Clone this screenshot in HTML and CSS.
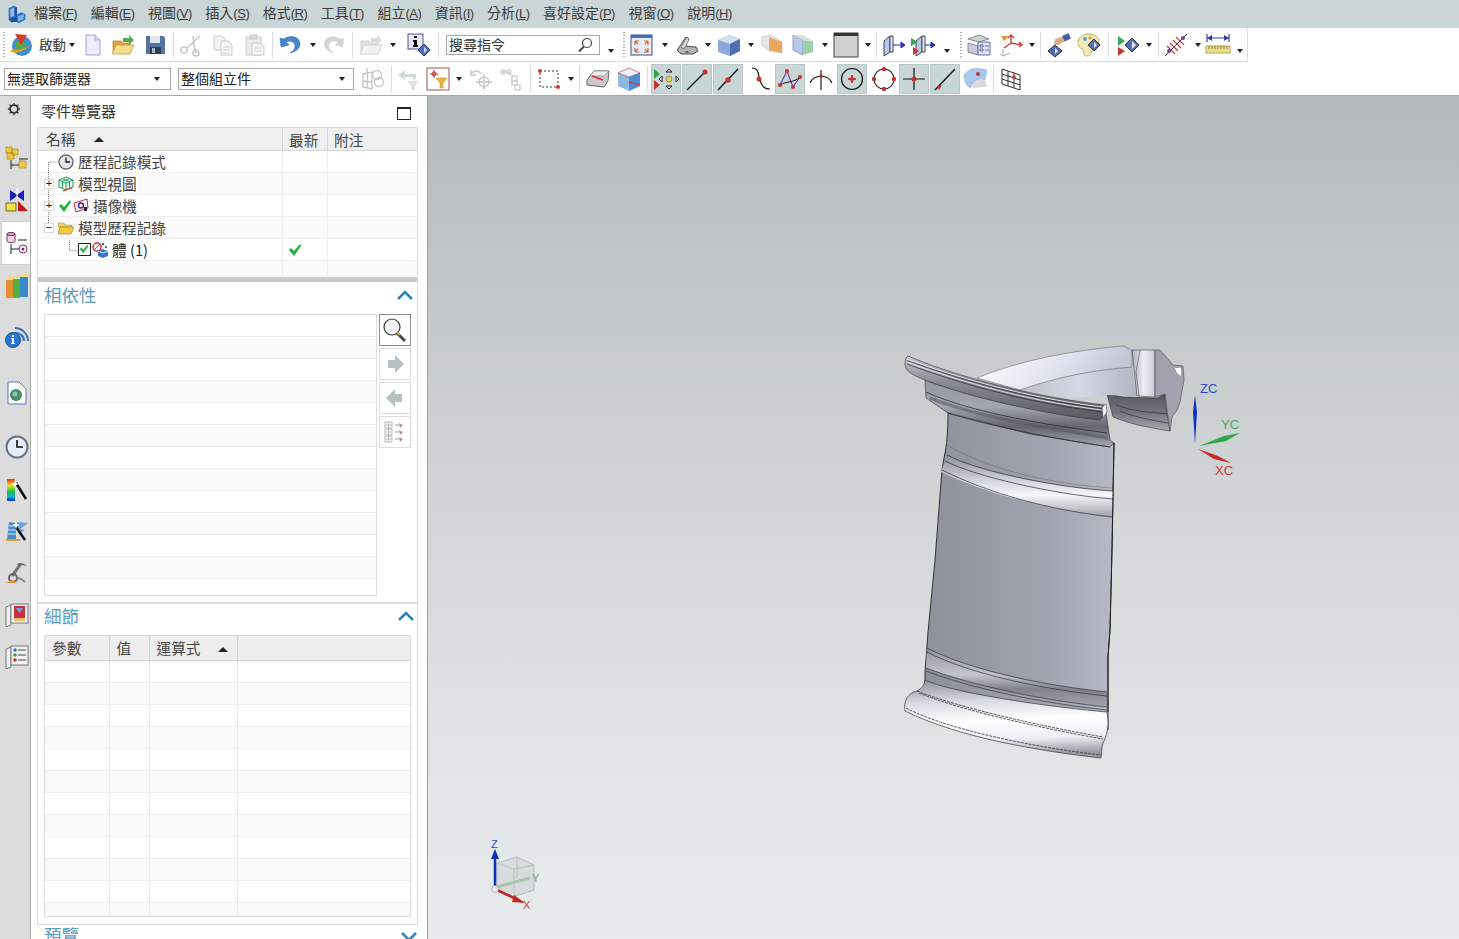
FILE: index.html
```html
<!DOCTYPE html>
<html lang="zh-Hant">
<head>
<meta charset="utf-8">
<title>NX</title>
<link rel="stylesheet" href="styles.css">
</head>
<body>
<header class="menubar">
  <svg class="applogo" viewBox="0 0 24 24"><path d="M2 5l6-3 4 2v9l5-3 5 2v7l-8 4-3-2-6 1-3-3z" fill="#2f6fc4"/><path d="M4 6l5-2v10l-5 2z" fill="#8dbcf0"/><path d="M9 4l3 1v9l-3 0z" fill="#1d4f9c"/><path d="M13 15l7-3v6l-7 3z" fill="#7fb2ea"/><path d="M3 18l8-3 2 6-8 1z" fill="#1d4f9c"/></svg>
  <nav class="menus">
    <span class="m">檔案<i>(<u>F</u>)</i></span>
    <span class="m">編輯<i>(<u>E</u>)</i></span>
    <span class="m">視圖<i>(<u>V</u>)</i></span>
    <span class="m">插入<i>(<u>S</u>)</i></span>
    <span class="m">格式<i>(<u>R</u>)</i></span>
    <span class="m">工具<i>(<u>T</u>)</i></span>
    <span class="m">組立<i>(<u>A</u>)</i></span>
    <span class="m">資訊<i>(<u>I</u>)</i></span>
    <span class="m">分析<i>(<u>L</u>)</i></span>
    <span class="m">喜好設定<i>(<u>P</u>)</i></span>
    <span class="m">視窗<i>(<u>O</u>)</i></span>
    <span class="m">說明<i>(<u>H</u>)</i></span>
  </nav>
</header>

<div class="bar bar1">
  <span class="c w8"><b class="grip"></b></span>
  <span class="c w27"><svg class="i" viewBox="0 0 24 24"><circle cx="12" cy="13" r="10" fill="#3f8fd0"/><path d="M5 9l7-2 4 5-5 7-5-4z" fill="#5aa84a"/><path d="M0 18C7 23 20 16 24 5c-2 8-13 14-21 11z" fill="#e8a020"/><path d="M5 1l12 1-6 10z" fill="#d83c2c"/></svg></span>
  <span class="c w32 lbl"><span>啟動</span></span>
  <span class="c w10"><b class="car"></b></span>
  <span class="c w32"><svg class="i" viewBox="0 0 24 24"><path d="M5 2h9l5 5v15H5z" fill="#eeeefa" stroke="#a0a0d8"/><path d="M14 2v5h5" fill="#dcdcf2" stroke="#a0a0d8"/></svg></span>
  <span class="c w28"><svg class="i" viewBox="0 0 24 24"><path d="M2 8h8l2 2h7v10H2z" fill="#d9a93c" stroke="#a98428" stroke-width=".7"/><path d="M5 12h18l-4 9H1z" fill="#f4de8c" stroke="#b8963a" stroke-width=".7"/><path d="M12 5h6V2l5 5-5 5V9h-6z" fill="#5aa84a"/></svg></span>
  <span class="c w36"><svg class="i" viewBox="0 0 24 24"><path d="M3 3h17l2 2v16H3z" fill="#53749e"/><rect x="7" y="3" width="10" height="7" fill="#dfe6ef"/><rect x="7" y="14" width="11" height="7" fill="#2d3e55"/><rect x="9" y="15" width="3" height="5" fill="#a8b6c8"/></svg></span>
  <b class="sep"></b>
  <span class="c w34"><svg class="i" viewBox="0 0 24 24" fill="none" stroke="#c6c9c9" stroke-width="1.600"><path d="M21 3L8 15M14 3l1 10 2 7"/><circle cx="5" cy="17" r="3"/><circle cx="17" cy="20" r="3"/></svg></span>
  <span class="c w30"><svg class="i" viewBox="0 0 24 24"><path d="M3 3h8l3 3v11H3z" fill="#f1f1f1" stroke="#cdcdcd"/><path d="M10 8h7l4 4v10H10z" fill="#f6f6f6" stroke="#c8c8c8"/><path d="M12 14h7M12 17h7M12 20h7" stroke="#cfcfcf"/></svg></span>
  <span class="c w34"><svg class="i" viewBox="0 0 24 24"><rect x="3" y="4" width="15" height="18" fill="#ececec" stroke="#cbcbcb"/><rect x="7" y="2" width="7" height="4" fill="#dcdcdc" stroke="#c4c4c4"/><path d="M9 10h8l4 4v8H9z" fill="#f7f7f7" stroke="#c8c8c8"/><path d="M11 15h8M11 18h8" stroke="#cfcfcf"/></svg></span>
  <b class="sep"></b>
  <span class="c w34"><svg class="i" viewBox="0 0 24 24"><path d="M2 5l1 9 8-2-3-3c4-2 9 0 9 4 0 3-2 5-5 7 6-1 10-5 10-9C22 4 13 1 6 6z" fill="#4a86d0" stroke="#2f62a8" stroke-width=".5"/></svg></span>
  <span class="c w12"><b class="car"></b></span>
  <span class="c w30"><svg class="i" viewBox="0 0 24 24"><path d="M22 5l-1 9-8-2 3-3c-4-2-9 0-9 4 0 3 2 5 5 7-6-1-10-5-10-9C2 4 11 1 18 6z" fill="#cfd6d6"/></svg></span>
  <span class="w3"></span><b class="sep"></b>
  <span class="c w36"><svg class="i" viewBox="0 0 24 24"><path d="M2 8h8l2 2h7v10H2z" fill="#e3e3e3" stroke="#d2d2d2"/><path d="M5 12h18l-4 9H1z" fill="#f2f2f2" stroke="#d4d4d4"/><path d="M12 5h6V2l5 5-5 5V9h-6z" fill="#dcdcdc"/></svg></span>
  <span class="c w8"><b class="car"></b></span>
  <span class="w3"></span>
  <span class="c w38"><svg class="i" viewBox="0 0 24 24"><rect x="1" y="1" width="15" height="15" fill="#e8e8f4" stroke="#50509c"/><path d="M7 3h3v2H7zM6 7h4v5h1v2H6v-2h1V9H6z" fill="#111"/><path d="M17 11l6 6-6 6-6-6z" fill="#4e6fb8" stroke="#2a3f80"/><path d="M17 14l3 3-3 3z" fill="#d7e0f4"/></svg></span>
  <b class="sep"></b>
  <span class="w7"></span>
  <div class="search"><span>搜尋指令</span><svg class="lens" viewBox="0 0 16 16" fill="none" stroke="#444" stroke-width="1.200"><circle cx="10" cy="6" r="4.500"/><path d="M7 9.500L2 14.500" stroke-width="2"/></svg></div>
  <span class="c w22"><b class="car low"></b></span>
  <span class="c w4"><b class="grip"></b></span>
  <span class="c w32"><svg class="i" viewBox="0 0 24 24"><rect x="1" y="2" width="21" height="20" fill="#e7ebf5" stroke="#4a6fb0" stroke-width="1.200"/><rect x="1" y="2" width="21" height="3" fill="#4a6fb0"/><path d="M5 8h4M5 8v4M18 8h-4M18 8v4M5 19h4M5 19v-4M18 19h-4M18 19v-4M5 8l3 3M18 8l-3 3M5 19l3-3M18 19l-3-3" stroke="#d8682c" stroke-width="1.200" fill="none"/></svg></span>
  <span class="c w14"><b class="car"></b></span>
  <span class="c w30"><svg class="i" viewBox="0 0 24 24"><path d="M2 17l3-4 6-9 3 2-4 7 11 1 2 4-5 3H6z" fill="#b0b2b4" stroke="#4c4c4c"/><path d="M12 4l-6 10 3 2 5-9z" fill="#dadada" stroke="#555" stroke-width=".6"/><ellipse cx="12" cy="19" rx="2" ry="1" fill="#666"/></svg></span>
  <span class="c w12"><b class="car"></b></span>
  <span class="c w30"><svg class="i" viewBox="0 0 24 24"><path d="M12 2l11 4v12l-10 5-12-4V7z" fill="#8ea8dc"/><path d="M12 2l11 4-10 5L1 7z" fill="#d3def5"/><path d="M13 11l10-5v12l-10 5z" fill="#4d6fb4"/></svg></span>
  <span class="c w14"><b class="car"></b></span>
  <span class="c w28"><svg class="i" viewBox="0 0 24 24"><path d="M2 4l9-2 11 7v11l-13-2-7-6z" fill="#e6e6e6" stroke="#cfcfcf"/><path d="M9 4l13 5v11l-13-3z" fill="#e8a860"/></svg></span>
  <span class="c w34"><svg class="i" viewBox="0 0 24 24"><path d="M2 2l10 5v15l-10-5z" fill="#b8c8e8" stroke="#8aa0c8"/><path d="M12 7l10 1v11l-10 3z" fill="#9cd0a8"/><path d="M2 2l10 0 10 6-10-1z" fill="#dcdcdc"/></svg></span>
  <span class="c w10"><b class="car"></b></span>
  <span class="c w32"><svg class="i" viewBox="0 0 24 24"><rect x="0" y="0" width="24" height="24" fill="#cfcfcf" stroke="#444"/><rect x="0" y="0" width="24" height="3" fill="#333"/></svg></span>
  <span class="c w12"><b class="car"></b></span>
  <span class="w2"></span><b class="sep"></b>
  <span class="c w34"><svg class="i" viewBox="0 0 24 24"><path d="M2 8l6-5v16l-6 4z" fill="#b8c8ea" stroke="#445"/><path d="M8 3h3v16H8z" fill="#e6ecf8" stroke="#445"/><path d="M11 12h8M19 9l4 3-4 3z" stroke="#2a2ac0" fill="#2a2ac0"/></svg></span>
  <span class="c w24"><svg class="i" viewBox="0 0 24 24"><path d="M5 8l6-5v16l-6 4z" fill="#b8c8ea" stroke="#445"/><path d="M11 3h3v16h-3z" fill="#e6ecf8" stroke="#445"/><path d="M14 12h6M20 9l4 3-4 3z" stroke="#2a2ac0" fill="#2a2ac0"/><path d="M0 5l7 4-7 4z" fill="#3aa85a"/><path d="M2 14l6 4-6 4z" fill="#c83a30"/></svg></span>
  <span class="c w24"><b class="car low"></b></span>
  <span class="c w4"><b class="grip"></b></span>
  <span class="c w32"><svg class="i" viewBox="0 0 24 24"><path d="M1 6l11-4 10 4-10 3z" fill="#c8d8c8" stroke="#889"/><path d="M1 10l10 3v9l-10-3z" fill="#c8ccd4" stroke="#889"/><path d="M11 9l12 0v13H11z" fill="#dfe2f2" stroke="#6a6aa8"/><path d="M13 12h3v2h-3zM18 13h4M13 16h3v2h-3zM18 17h4" stroke="#6a6aa8" fill="none"/></svg></span>
  <span class="c w32"><svg class="i" viewBox="0 0 24 24" fill="none"><path d="M12 10v-8M9 5l3-3 3 3" stroke="#c83a30" stroke-width="1.300"/><path d="M12 10l10 2M20 9l3 3-3 2" stroke="#c83a30" stroke-width="1.300"/><path d="M12 10L5 15" stroke="#c83a30" stroke-width="1.300"/><path d="M2 3h9L5 8z" fill="#e89040"/><path d="M4 16v7M4 23l7-3M4 23l-3-2" stroke="#aab" stroke-width="1"/></svg></span>
  <span class="c w10"><b class="car"></b></span>
  <span class="w3"></span><b class="sep"></b>
  <span class="c w36"><svg class="i" viewBox="0 0 24 24"><path d="M8 6c3-1 8-3 10-2l2 3-9 5H7z" fill="#d8b088"/><rect x="16" y="1" width="7" height="6" fill="#4a5aa8" transform="rotate(-25 20 4)"/><path d="M8 12l7 6-7 6-7-6z" fill="#4e6fb8" stroke="#333"/><path d="M8 15l3 3-3 3z" fill="#e2e8f8"/></svg></span>
  <span class="c w24"><svg class="i" viewBox="0 0 24 24"><path d="M12 1C5 1 1 5 1 10s4 5 5 7 0 6 4 6 4-4 6-6 6-3 6-8-4-8-10-8z" fill="#f4e8b8" stroke="#c8b050"/><circle cx="8" cy="6" r="2" fill="#48a8d8"/><circle cx="13" cy="5" r="1.500" fill="#e88a38"/><path d="M17 6l6 6-6 6-6-6z" fill="#4e6fb8" stroke="#333"/><path d="M17 9l3 3-3 3z" fill="#e2e8f8"/></svg></span>
  <span class="w7"></span><b class="sep"></b>
  <span class="c w36"><svg class="i" viewBox="0 0 24 24"><path d="M3 3l7 5-7 5z" fill="#3aa85a"/><path d="M3 14l7 4-7 5z" fill="#c83a30"/><path d="M17 5l7 7-7 7-7-7z" fill="#4e6fb8" stroke="#333"/><path d="M17 8l4 4-4 4z" fill="#e2e8f8"/></svg></span>
  <span class="c w8"><b class="car"></b></span>
  <span class="w5"></span><b class="sep"></b>
  <span class="c w34"><svg class="i" viewBox="0 0 24 24" fill="none"><path d="M1 23L23 1" stroke="#333"/><path d="M3 13l8 8M6 10l8 8M9 7l8 8M12 4l8 8" stroke="#c83a30" stroke-width="1.100"/><circle cx="5" cy="18" r="2" fill="#4a4ab0"/><circle cx="19" cy="5" r="2" fill="#4a4ab0"/></svg></span>
  <span class="c w10"><b class="car"></b></span>
  <span class="c w30"><svg class="i" viewBox="0 0 24 24"><path d="M1 5h22M1 1v8M23 1v8" stroke="#3a3a9c" fill="none" stroke-width="1.200"/><path d="M1 5l5-3v6zM23 5l-5-3v6z" fill="#3a3a9c"/><rect x="0" y="13" width="24" height="7" fill="#ecdc8c" stroke="#b8a858"/><path d="M3 13v3M6 13v3M9 13v3M12 13v3M15 13v3M18 13v3M21 13v3" stroke="#8a7a38"/></svg></span>
  <span class="c w14"><b class="car low"></b></span>
</div>

<div class="bar bar2">
  <div class="sel s1"><span>無選取篩選器</span><b class="car"></b></div>
  <div class="sel s2"><span>整個組立件</span><b class="car"></b></div>
  <span class="c w37"><svg class="i" viewBox="0 0 24 24" fill="none" stroke="#c4c8c8" stroke-width="1.300"><path d="M2 7l9-2v17l-9-2zM2 14l9 1M6.500 6v15M6 1v6"/><circle cx="16" cy="8" r="4.500"/><circle cx="18" cy="15" r="4.500"/></svg></span>
  <b class="sep"></b>
  <span class="c w32"><svg class="i" viewBox="0 0 24 24"><path d="M9 3L2 8l7 5V10h8v4l3-3V7H9z" fill="#d2d8d8"/><path d="M11 14h12l-4 5v4h-4v-4z" fill="#e2e4e4"/></svg></span>
  <span class="c w28"><svg class="i" viewBox="0 0 24 24"><rect x="1" y="1" width="22" height="22" fill="#fff" stroke="#a85050"/><path d="M8 3v8M4 7h8" stroke="#c83030"/><circle cx="8" cy="7" r="2" fill="none" stroke="#c83030"/><path d="M10 11h11l-4 5v5h-3v-5z" fill="#e8b83c" stroke="#a8882c" stroke-width=".5"/></svg></span>
  <span class="c w14"><b class="car"></b></span>
  <span class="c w30"><svg class="i" viewBox="0 0 24 24" fill="none" stroke="#c4c8c8" stroke-width="1.300"><path d="M2 7c3-4 8-4 10 0M2 3v5h5"/><circle cx="15" cy="15" r="5"/><path d="M15 7v16M7 15h16"/></svg></span>
  <span class="c w30"><svg class="i" viewBox="0 0 24 24" fill="none" stroke="#cdd0d0" stroke-width="1.400"><path d="M3 5h6l3 3"/><circle cx="4" cy="5" r="2"/><circle cx="10" cy="5" r="2"/><rect x="13" y="9" width="5" height="5"/><rect x="13" y="14" width="5" height="4"/><rect x="16" y="18" width="5" height="5"/></svg></span>
  <span class="w4"></span><b class="sep"></b>
  <span class="c w36"><svg class="i" viewBox="0 0 24 24"><rect x="3" y="4" width="18" height="16" fill="none" stroke="#333" stroke-dasharray="2 2"/><circle cx="3" cy="4" r="2" fill="#c83a30"/><circle cx="21" cy="20" r="2" fill="#c83a30"/></svg></span>
  <span class="c w8"><b class="car"></b></span>
  <span class="w4"></span><b class="sep"></b>
  <span class="c w36"><svg class="i" viewBox="0 0 24 24"><path d="M1 13L8 4h15l-1 10-4 6-17-2z" fill="#c9c9c9" stroke="#666"/><path d="M8 4h15L18 9H4z" fill="#eee" stroke="#777" stroke-width=".6"/><path d="M6 9l11 4" stroke="#d83030" stroke-width="1.500"/></svg></span>
  <span class="c w26"><svg class="i" viewBox="0 0 24 24"><path d="M1 6l11-5 11 5v13l-11 5-11-5z" fill="#8cb8e4"/><path d="M1 6l11-5 11 5-11 4z" fill="#e8f2fc" stroke="#d83030" stroke-width=".6"/><path d="M12 10v14l11-5V6z" fill="#4f8cce"/><path d="M12 15l11 3" stroke="#d83030"/></svg></span>
  <span class="w5"></span><b class="sep"></b>
  <span class="w3"></span>
  <span class="tg"><svg class="i" viewBox="0 0 24 24"><path d="M0 2l6 5-6 5z" fill="#2ca84a"/><path d="M0 13l6 5-6 5z" fill="#c83030"/><circle cx="15" cy="12" r="3" fill="#e8d840" stroke="#888"/><path d="M15 2l3 3h-6zM15 22l3-3h-6zM5 12l3-3v6zM25 12l-3-3v6z" fill="#fff" stroke="#111"/></svg></span>
  <span class="tg"><svg class="i" viewBox="0 0 24 24"><path d="M2 23L21 4" stroke="#111" stroke-width="1.300"/><circle cx="20" cy="5" r="2.500" fill="#c83030"/></svg></span>
  <span class="tg"><svg class="i" viewBox="0 0 24 24"><path d="M2 23L22 2" stroke="#111" stroke-width="1.300"/><circle cx="12" cy="13" r="2.700" fill="#c83030"/></svg></span>
  <span class="c w31"><svg class="i" viewBox="0 0 24 24" fill="none"><path d="M4 1c8 0 6 9 8 13s3 8 10 8" stroke="#111" stroke-width="1.200"/><circle cx="11" cy="12" r="2.500" fill="#c83030"/></svg></span>
  <span class="tg"><svg class="i" viewBox="0 0 24 24" fill="none"><path d="M2 18L9 4l6 16 7-10" stroke="#7a3fb0" stroke-width="1.200"/><path d="M2 18c6-4 14-2 20-8" stroke="#111"/><circle cx="2" cy="18" r="2" fill="#c83030"/><circle cx="9" cy="4" r="2" fill="#c83030"/><circle cx="15" cy="20" r="2" fill="#c83030"/><circle cx="22" cy="10" r="2" fill="#c83030"/></svg></span>
  <span class="c w30"><svg class="i" viewBox="0 0 24 24" fill="none"><path d="M1 16C5 7 19 7 23 16M12 3v20" stroke="#111" stroke-width="1.100"/><circle cx="12" cy="9" r="1.800" fill="#c83030"/></svg></span>
  <span class="tg ml1"><svg class="i" viewBox="0 0 24 24" fill="none"><circle cx="12" cy="12" r="10.500" stroke="#111" stroke-width="1.200"/><path d="M12 8l1 3 3 1-3 1-1 3-1-3-3-1 3-1z" fill="#c83030" stroke="#c83030"/></svg></span>
  <span class="c w31"><svg class="i" viewBox="0 0 24 24" fill="none"><circle cx="12" cy="12" r="10" stroke="#222" stroke-width="1.100"/><circle cx="12" cy="2" r="2.200" fill="#c83030"/><circle cx="12" cy="22" r="2.200" fill="#c83030"/><circle cx="2" cy="12" r="2.200" fill="#c83030"/><circle cx="22" cy="12" r="2.200" fill="#c83030"/></svg></span>
  <span class="tg"><svg class="i" viewBox="0 0 24 24"><path d="M1 12h22M12 1v22" stroke="#111" stroke-width="1.200"/><circle cx="12" cy="12" r="2.500" fill="#c83030"/></svg></span>
  <span class="tg"><svg class="i" viewBox="0 0 24 24"><path d="M2 23L22 2" stroke="#111" stroke-width="1.300"/><path d="M4 19l5-1-3 5z" fill="#c83030"/></svg></span>
  <span class="c w30"><svg class="i" viewBox="0 0 24 24"><path d="M0 8C4 1 14 0 23 3l-2 10c-5-2-10-1-15 8C2 19 0 13 0 8z" fill="#a8c8ec" stroke="#8aa8cc" stroke-width=".5"/><path d="M21 13l2 7-17 1c5-7 10-10 15-8z" fill="#d8d8d8"/><circle cx="14" cy="7" r="2" fill="#c83030"/></svg></span>
  <span class="w2"></span><b class="sep"></b>
  <span class="c w34"><svg class="i" viewBox="0 0 24 24" fill="none" stroke="#333"><path d="M3 2l18 6v15L3 17zM9 4v15M15 6v15M3 7l18 6M3 12l18 6"/><circle cx="15" cy="10" r="1.800" fill="#c83030" stroke="none"/></svg></span>
</div>

<main class="work">
  <aside class="rail">
    <div class="tab h26"><svg class="gear" viewBox="0 0 16 16" fill="none" stroke="#333" stroke-width="2"><circle cx="8" cy="8" r="4.500"/><path d="M8 1v2M8 13v2M1 8h2M13 8h2M3 3l1.500 1.500M11.500 11.500L13 13M3 13l1.500-1.500M11.500 4.500L13 3" stroke-width="1.500"/></svg></div>
    <div class="h15"></div>
    <div class="tab h42"><svg class="si" viewBox="0 0 24 24"><path d="M1 1h6v6H1zM7 3h6v6H7zM2 7h7v6H2z" fill="#f0c840" stroke="#b08820" stroke-width=".7"/><path d="M14 13h9M6 14v9M6 19h8" stroke="#222" fill="none"/><path d="M14 15h7v7h-7z" fill="#f0c840" stroke="#b08820" stroke-width=".7"/></svg></div>
    <div class="tab h42"><svg class="si" viewBox="0 0 24 24"><path d="M5 2l7 5 7-5v11l-7-5-7 5z" fill="#1a1ac0"/><path d="M12 0v11" stroke="#fff"/><path d="M1 15h10v8H1z" fill="#f4e040" stroke="#333" stroke-width=".7"/><path d="M13 23V13l10 10z" fill="#c01818"/></svg></div>
    <div class="tab active"><svg class="si" viewBox="0 0 24 24" fill="none"><path d="M2 3v7c0 2 8 2 8 0V3" fill="#f2d8e6" stroke="#70305a"/><ellipse cx="6" cy="3" rx="4" ry="1.600" fill="#e4a4c4" stroke="#70305a"/><path d="M13 9h9M6 13v10M6 18h8" stroke="#222"/><circle cx="18" cy="18" r="4" stroke="#80287a"/><circle cx="18" cy="18" r="1.500" fill="#80287a"/></svg></div>
    <div class="tab h42"><svg class="si big" viewBox="0 0 24 24"><path d="M1 6h7v18H1z" fill="#e89030"/><path d="M8 5h7v19H8z" fill="#54b040"/><path d="M15 3h8v20h-8z" fill="#3a88cc"/><path d="M1 6l3-4h7l-3 3zM8 5l3-3h5l-1 1zM15 3l3-3h6l-1 3z" fill="#f0dc90"/></svg></div>
    <div class="h3"></div>
    <div class="tab h54"><svg class="si big" viewBox="0 0 24 24" fill="none"><path d="M10 3c7 0 13 6 13 13M10 8c5 0 9 3 9 8" stroke="#3a70c0" stroke-width="2"/><circle cx="8" cy="15" r="7.500" fill="#2a78d0" stroke="#1a4c90"/><path d="M7 10h2v2H7zM6 13h3v5h1v1H6v-1h1v-4H6z" fill="#fff"/></svg></div>
    <div class="tab h58"><svg class="si big" viewBox="0 0 24 24"><path d="M3 1h11l7 7v15H3z" fill="#fff" stroke="#5878b8"/><circle cx="11" cy="14" r="6" fill="#4a9058"/><circle cx="10" cy="13" r="2.500" fill="#8ac0d8"/></svg></div>
    <div class="tab h50"><svg class="si big" viewBox="0 0 24 24"><circle cx="12" cy="12" r="10.500" fill="#e8eefa" stroke="#6a7488" stroke-width="2"/><path d="M12 5v7h6" stroke="#111" stroke-width="1.600" fill="none"/></svg></div>
    <div class="tab h36"><svg class="si big" viewBox="0 0 24 24"><defs><linearGradient id="rb" x1="0" y1="0" x2="0" y2="1"><stop offset="0" stop-color="#e83020"/><stop offset=".3" stop-color="#f0e020"/><stop offset=".55" stop-color="#20c050"/><stop offset=".8" stop-color="#10b0d0"/><stop offset="1" stop-color="#1030c0"/></linearGradient></defs><rect x="2" y="1" width="8" height="22" fill="url(#rb)"/><path d="M11 5l10 16" stroke="#111" stroke-width="2.600"/><path d="M10 2l1 3 3 1-3 1-1 3-1-3-3-1 3-1z" fill="#fff"/></svg></div>
    <div class="tab h46"><svg class="si big" viewBox="0 0 24 24"><path d="M4 3l7 1v17H2z" fill="#4a8ac8"/><path d="M4 7h7M3 11h8M3 15h8" stroke="#cfe2f4"/><path d="M11 3l12 1-8 6 5 1-6 4z" fill="#6aa0d8"/><path d="M1 21h14" stroke="#d8a030" stroke-width="2"/><path d="M11 8l9 13" stroke="#111" stroke-width="2.400"/><path d="M11 2l1 3 3 1-3 1-1 3-1-3-3-1 3-1z" fill="#fff"/></svg></div>
    <div class="tab h38"><svg class="si big" viewBox="0 0 24 24" fill="none"><path d="M7 15L15 4" stroke="#777" stroke-width="3"/><path d="M12 3c3-2 7-1 10 2l-5-1-3 2z" fill="#666"/><circle cx="8" cy="17" r="4" stroke="#666" stroke-width="2"/><path d="M12 17c3 0 6 2 8 4" stroke="#888" stroke-width="2"/><path d="M1 22l7-3 4 3z" fill="#e89030"/></svg></div>
    <div class="tab h46"><svg class="si big" viewBox="0 0 24 24"><path d="M1 4l5-2v20l-5 2z" fill="#f0f0f0" stroke="#777"/><rect x="6" y="1" width="17" height="19" fill="#f0f0f0" stroke="#777"/><rect x="9" y="3" width="11" height="12" fill="#c83040"/><path d="M11 5h7l-3.500 5z" fill="#7aa0e0"/><rect x="9" y="15" width="11" height="3" fill="#e8c070"/></svg></div>
    <div class="tab h38"><svg class="si big" viewBox="0 0 24 24"><path d="M1 4l5-2v20l-5 2z" fill="#f0f0f0" stroke="#777"/><rect x="6" y="1" width="17" height="19" fill="#f4f4f4" stroke="#777"/><circle cx="10" cy="5" r="1.800" fill="#3070c8"/><circle cx="10" cy="10" r="1.800" fill="#40a040"/><circle cx="10" cy="15" r="1.800" fill="#c83030"/><path d="M13 5h8M13 10h8M13 15h8" stroke="#444"/></svg></div>
  </aside>

  <section class="panel">
    <div class="phead"><h1>零件導覽器</h1><b class="maxi"></b></div>
    <div class="frame">
      <div class="tree">
        <div class="thead">
          <div class="col cn">名稱<b class="up tri1"></b></div>
          <div class="col cl">最新</div>
          <div class="col cr">附注</div>
        </div>
        <svg class="lines" viewBox="0 0 60 110"><path d="M10.500 11V79M10.500 11H20M31.500 100V89M31.500 99.500H40" stroke="#888" fill="none" stroke-dasharray="1 1"/></svg>
        <div class="row">
          <div class="cn"><span class="ind"></span><svg class="ti" viewBox="0 0 16 16"><circle cx="8" cy="8" r="7" fill="#e8e8ec" stroke="#666" stroke-width="1.400"/><path d="M8 3.500V8h4" stroke="#111" fill="none" stroke-width="1.300"/></svg><span class="tx">歷程記錄模式</span></div><div class="cl"></div><div class="cr"></div>
        </div>
        <div class="row alt">
          <div class="cn"><span class="ind"><b class="exp">+</b></span><svg class="ti" viewBox="0 0 16 16" fill="none" stroke="#20a060" stroke-width="1.100"><path d="M8 1l7 3v7l-7 3-7-3V4zM1 4l7 3 7-3M8 7v7M4.500 2.500L11.500 5.500v7M11.500 2.500L4.500 5.500v7"/><path d="M5 15l9-3" stroke="#d84020"/></svg><span class="tx">模型視圖</span></div><div class="cl"></div><div class="cr"></div>
        </div>
        <div class="row">
          <div class="cn"><span class="ind"><b class="exp">+</b></span><svg class="ck" viewBox="0 0 14 14"><path d="M1 7l2-2 3 3 6-7 1 2-7 10z" fill="#22b040"/></svg><svg class="ti" viewBox="0 0 16 16"><path d="M1 5l13-4 1 9-12 4z" fill="#fbeaea" stroke="#c83030"/><circle cx="8" cy="7.500" r="2.500" fill="none" stroke="#2020a0" stroke-width="1.300"/><path d="M11 9h3v4h-3z" fill="#222"/></svg><span class="tx">攝像機</span></div><div class="cl"></div><div class="cr"></div>
        </div>
        <div class="row alt">
          <div class="cn"><span class="ind"><b class="exp">−</b></span><svg class="ti" viewBox="0 0 16 16"><path d="M0 3h6l1 2h7v2H0z" fill="#f0d070" stroke="#a08020" stroke-width=".5"/><path d="M2 7h14l-3 7H0z" fill="#f6c840" stroke="#a08020" stroke-width=".6"/></svg><span class="tx">模型歷程記錄</span></div><div class="cl"></div><div class="cr"></div>
        </div>
        <div class="row">
          <div class="cn"><span class="ind i2"></span><span class="cb"><svg viewBox="0 0 12 12"><path d="M1 6l2-2 2 3 5-6 1 2-6 8z" fill="#22b040"/></svg></span><svg class="ti body" viewBox="0 0 16 16"><circle cx="5" cy="5" r="4" fill="#fff" stroke="#d03030" stroke-width="1.500"/><path d="M2 8l6-6" stroke="#d03030"/><path d="M10 2h2M14 4v2" stroke="#222" stroke-width="1.300"/><path d="M6 9l5-2 5 2v5l-5 2-5-2z" fill="#3f74c8"/><path d="M6 9l5 2 5-2" stroke="#cfe0f6" fill="none"/></svg><span class="tx dk">體 (1)</span></div><div class="cl"><svg class="ck m" viewBox="0 0 14 14"><path d="M1 7l2-2 3 3 6-7 1 2-7 10z" fill="#22b040"/></svg></div><div class="cr"></div>
        </div>
        <div class="row alt last"><div class="cn"></div><div class="cl"></div><div class="cr"></div></div>
      </div>

      <div class="sect s-dep">
        <div class="stitle"><h2>相依性</h2><svg class="chev" viewBox="0 0 16 10"><path d="M1 9l7-7 7 7" fill="none" stroke="#2f86b4" stroke-width="2.600"/></svg></div>
        <div class="depbody">
          <div class="stripes"></div>
          <div class="btns">
            <span class="btn on"><svg viewBox="0 0 26 26"><circle cx="10" cy="10" r="8" fill="#f4f4fa" stroke="#333" stroke-width="1.200"/><path d="M15 16l8 8" stroke="#444" stroke-width="3"/><path d="M15 15l3 3" stroke="#c8b060" stroke-width="2"/></svg></span>
            <span class="btn"><svg viewBox="0 0 26 26"><path d="M6 9h7V4l9 9-9 9v-5H6z" fill="#b6c2c2"/></svg></span>
            <span class="btn"><svg viewBox="0 0 26 26"><path d="M20 9h-7V4l-9 9 9 9v-5h7z" fill="#b6c2c2"/></svg></span>
            <span class="btn"><svg viewBox="0 0 26 26" fill="none" stroke="#b8b8b8"><path d="M3 3h7v6H3zM3 10h7v6H3zM3 17h7v6H3zM6.500 3v20M3 6h7M3 13h7M3 20h7"/><path d="M13 6h4M13 13h4M13 20h4" stroke="#999"/><path d="M17 4l4 2-3 3zM17 11l4 2-3 3zM17 18l4 2-3 3z" fill="#b89090" stroke="none"/></svg></span>
          </div>
        </div>
      </div>

      <div class="sect s-det">
        <div class="stitle"><h2>細節</h2><svg class="chev" viewBox="0 0 16 10"><path d="M1 9l7-7 7 7" fill="none" stroke="#2f86b4" stroke-width="2.600"/></svg></div>
        <div class="detwrap">
          <table class="det">
            <thead><tr><th class="d1">參數</th><th class="d2">值</th><th class="d3">運算式<b class="up tri2"></b></th><th></th></tr></thead>
            <tbody>
              <tr><td></td><td></td><td></td><td></td></tr><tr><td></td><td></td><td></td><td></td></tr>
              <tr><td></td><td></td><td></td><td></td></tr><tr><td></td><td></td><td></td><td></td></tr>
              <tr><td></td><td></td><td></td><td></td></tr><tr><td></td><td></td><td></td><td></td></tr>
              <tr><td></td><td></td><td></td><td></td></tr><tr><td></td><td></td><td></td><td></td></tr>
              <tr><td></td><td></td><td></td><td></td></tr><tr><td></td><td></td><td></td><td></td></tr>
              <tr><td></td><td></td><td></td><td></td></tr><tr><td></td><td></td><td></td><td></td></tr>
            </tbody>
          </table>
        </div>
      </div>
    </div>
    <div class="stitle prev"><h2>預覽</h2><svg class="chev" viewBox="0 0 16 10"><path d="M1 1l7 7 7-7" fill="none" stroke="#2f86b4" stroke-width="2.600"/></svg></div>
  </section>

  <section class="view">
    <svg class="scene" viewBox="428 96 1031 843">
      <defs>
        <linearGradient id="bodyG" x1="0" x2="1" y1="0" y2="0"><stop offset="0" stop-color="#8d919c"/><stop offset=".35" stop-color="#979ba6"/><stop offset=".7" stop-color="#a3a7b3"/><stop offset="1" stop-color="#b6bac6"/></linearGradient>
        <linearGradient id="archG" x1="0" x2="1" y1="0" y2=".2"><stop offset="0" stop-color="#ffffff"/><stop offset=".6" stop-color="#dfe3f0"/><stop offset="1" stop-color="#c2c6d4"/></linearGradient>
        <linearGradient id="archL" x1="0" x2="1" y1="0" y2="0"><stop offset="0" stop-color="#bcc0ca"/><stop offset=".5" stop-color="#d5d9e6"/><stop offset="1" stop-color="#b2b6c2"/></linearGradient>
        <linearGradient id="darkG" x1="0" x2="0" y1="0" y2="1"><stop offset="0" stop-color="#55585f"/><stop offset=".5" stop-color="#72757f"/><stop offset="1" stop-color="#a8abb5"/></linearGradient>
        <linearGradient id="blockG" x1="0" x2="1" y1="0" y2="0"><stop offset="0" stop-color="#a9adba"/><stop offset=".5" stop-color="#eceffa"/><stop offset="1" stop-color="#c6c9d6"/></linearGradient>
        <linearGradient id="flareG" x1="0" x2=".1" y1="0" y2="1"><stop offset="0" stop-color="#8f929d"/><stop offset=".3" stop-color="#d8dae2"/><stop offset=".55" stop-color="#ffffff"/><stop offset=".8" stop-color="#eceef4"/><stop offset="1" stop-color="#9a9da8"/></linearGradient>
        <linearGradient id="bandG" x1="0" x2="0" y1="0" y2="1"><stop offset="0" stop-color="#9498a3"/><stop offset=".4" stop-color="#a2a6b1"/><stop offset=".7" stop-color="#62656e"/><stop offset="1" stop-color="#a5a9b4"/></linearGradient>
        <linearGradient id="midG" x1="0" x2="0" y1="0" y2="1"><stop offset="0" stop-color="#8b8e98"/><stop offset=".4" stop-color="#cfd2dc"/><stop offset=".65" stop-color="#f6f7fb"/><stop offset="1" stop-color="#9fa2ad"/></linearGradient>
        <linearGradient id="railG" x1="0" x2="0" y1="0" y2="1"><stop offset="0" stop-color="#c5c7d0"/><stop offset=".4" stop-color="#8a8d96"/><stop offset="1" stop-color="#55585f"/></linearGradient>
        <linearGradient id="lowG" x1="0" x2="0" y1="0" y2="1"><stop offset="0" stop-color="#8f929d"/><stop offset=".45" stop-color="#c3c6d1"/><stop offset=".7" stop-color="#80838d"/><stop offset="1" stop-color="#a3a6b1"/></linearGradient>
      </defs>
      <g stroke-linejoin="round">
        <path d="M1107 394L1123 397 1157 398 1165 394C1166 410 1168 420 1170 431 1150 428 1130 424 1113 417z" fill="url(#darkG)" stroke="#333" stroke-width=".6"/>
        <path d="M1116 405C1135 412 1150 412 1168 414M1120 411C1138 418 1152 420 1168 423" fill="none" stroke="#333" stroke-width=".7"/>
        <path d="M1020 390C1060 378 1095 370 1132 367L1137 396 1107 395 1070 398z" fill="url(#archL)"/>
        <path d="M977 378C1020 360 1075 350 1123 346L1132 350 1132 367C1095 370 1060 376 1020 390z" fill="url(#archG)" stroke="#555" stroke-width=".5"/>
        <path d="M1132 350L1155 350 1155 397 1137 396z" fill="url(#blockG)" stroke="#444" stroke-width=".6"/>
        <path d="M1140 350L1136 372 1139 396" fill="none" stroke="#555" stroke-width=".6"/>
        <path d="M1155 350L1160 350 1173 365 1183 366 1184 380 1180 402 1177 410 1172 417 1170 431 1165 394 1155 397z" fill="#a0a3af" stroke="#444" stroke-width=".6"/>
        <path d="M1175 368L1181 368 1181 376 1177 373z" fill="#fff"/>

        <path d="M948 412C948 430 947 445 944 458L942 470 935 560 928 632 925 672 925 690 1108 730 1108 657 1110 630 1112 550 1114 443z" fill="url(#bodyG)" stroke="#222" stroke-width=".9"/>

        <path d="M947 455C975 470 1050 487 1113 491L1112 517C1050 510 990 495 941 472z" fill="url(#midG)"/>
        <path d="M947 455C975 470 1050 487 1113 491M945 461C975 476 1050 494 1113 499M942 470C990 494 1050 510 1112 517" fill="none" stroke="#2a2a30" stroke-width=".7"/>
        <path d="M947 445C990 470 1050 484 1113 488" fill="none" stroke="#555" stroke-width=".4"/>

        <path d="M925 380L926 398 948 413 1030 434 1110 447 1114 443 1110 440 1106 413 1100 418C1050 412 980 400 925 380z" fill="url(#bandG)" stroke="#333" stroke-width=".6"/>
        <path d="M926 392C970 412 1040 424 1107 433M948 413C990 426 1050 438 1110 447" fill="none" stroke="#222" stroke-width=".7"/>
        <path d="M930 398C980 418 1050 428 1108 438" fill="none" stroke="#55585f" stroke-width="3.500" opacity=".55"/>

        <path d="M927 648C970 670 1040 685 1107 692L1107 707C1040 700 970 685 926 668z" fill="url(#lowG)"/>
        <path d="M927 648C970 670 1040 685 1107 692M927 652C970 674 1040 689 1107 696M926 668C970 685 1040 700 1107 707M926 671C970 688 1040 703 1107 710" fill="none" stroke="#30323a" stroke-width=".7"/>

        <path d="M925 680C950 692 1040 706 1107 712 1109 725 1108 732 1104 741 1101 747 1102 752 1101 758 1040 751 960 738 905 711 903 702 908 694 914 692 920 690 924 687 925 680z" fill="url(#flareG)" stroke="#333" stroke-width=".7"/>
        <path d="M917 691C960 708 1040 726 1103 737M919 693C960 710 1040 728 1103 739" fill="none" stroke="#333" stroke-width=".8" stroke-dasharray="3 1"/>
        <path d="M906 708C950 731 1040 748 1101 755" fill="none" stroke="#333" stroke-width=".8" stroke-dasharray="3 1"/>
        <path d="M1108 712L1108 657 1110 630 1112 550 1114 443" fill="none" stroke="#222" stroke-width="1"/>

        <path d="M908 356C945 372 1020 395 1104 405L1106 413 1100 420C1050 415 970 398 925 380 915 376 905 372 905 364 905 360 906 357 908 356z" fill="url(#railG)" stroke="#333" stroke-width=".6"/>
        <path d="M907 359C950 375 1020 397 1102 407M907 362C950 378 1020 400 1102 410" fill="none" stroke="#e8e9f0" stroke-width=".9"/>
        <path d="M907 360.500C950 376 1020 398 1102 408.500M907 364C950 380 1020 402 1102 412" fill="none" stroke="#24252a" stroke-width=".7"/>
        <path d="M1102 407L1106 404 1107 412 1103 418z" fill="#f0f0f0" stroke="#333" stroke-width=".5"/>
      </g>

      <path d="M1195 444L1193 412 1195 395 1197 412z" fill="#1030c8"/>
      <path d="M1199 446L1224 436 1240 433 1226 441z" fill="#2ca84a"/>
      <path d="M1198 449L1218 456 1231 463 1214 459z" fill="#c82828"/>
      <text x="1200" y="393" class="t3 tb">ZC</text>
      <text x="1221" y="429" class="t3 tg2">YC</text>
      <text x="1215" y="475" class="t3 tr">XC</text>

      <g>
        <path d="M497 863L517 857 534 865 534 890 513 897 497 888z" fill="#d4d7d8" fill-opacity=".8" stroke="#b6b9ba"/>
        <path d="M497 863L514 869 534 865M514 869V897M517 857V878" fill="none" stroke="#bcbfc0"/>
        <path d="M497 887L530 878" stroke="#a8c4a8" stroke-width="3"/>
        <path d="M495 889V858" stroke="#1030b8" stroke-width="2.500"/>
        <path d="M491 859L495 849 499 859z" fill="#1030b8"/>
        <path d="M497 890L518 900" stroke="#c02828" stroke-width="2.500"/>
        <path d="M514 895L525 903 512 902z" fill="#c02828"/>
        <circle cx="495" cy="889" r="3.500" fill="#e8e8e8" stroke="#999" stroke-width=".6"/>
      </g>
      <text x="491" y="848" class="t2 tb">Z</text>
      <text x="532" y="882" class="t2 tg3">Y</text>
      <text x="523" y="909" class="t2 tr">X</text>
    </svg>
  </section>
</main>
</body>
</html>
```
FILE: styles.css
```css
* { box-sizing: border-box; }
html, body { margin: 0; height: 939px; overflow: hidden; }
body { font-family: "Noto Sans CJK TC", "Liberation Sans", sans-serif; font-size: 14px; color: #333; background: #fff; display: flex; flex-direction: column; }

.menubar { height: 28px; background: #c9d6d5; display: flex; align-items: center; padding-left: 7px; flex: none; }
.applogo { width: 20px; height: 20px; margin-right: 7px; }
.menus { display: flex; gap: 13.500px; line-height: 24px; color: #3a3a3a; padding-bottom: 3px; }
.m { white-space: nowrap; }
.m i { font-style: normal; font-size: 13px; font-family: "Liberation Sans", sans-serif; letter-spacing: -.5px; }

.bar { display: flex; align-items: center; flex: none; background: #fff; }
.bar1 { height: 34px; width: 1248px; border-right: 1px solid #ddd; border-bottom: 1px solid #ddd; }
.bar2 { padding-left: 4px; border-bottom: 1px solid #a5a9a9; height: 34px; }

.c { display: flex; align-items: center; justify-content: center; flex: none; height: 30px; position: relative; }
.i { width: 24px; height: 24px; display: block; flex: none; overflow: visible; }
.lbl { justify-content: flex-start; padding-left: 4px; font-size: 13.500px; }
.lbl span { margin-top: -2px; }
.w2 { width: 2px; flex: none; } .w3 { width: 3px; flex: none; } .w4 { width: 4px; flex: none; } .w5 { width: 5px; flex: none; } .w7 { width: 7px; flex: none; }
.w8 { width: 8px; } .w10 { width: 10px; } .w12 { width: 12px; } .w14 { width: 14px; } .w22 { width: 22px; } .w24 { width: 24px; }
.w26 { width: 26px; } .w27 { width: 27px; } .w28 { width: 28px; } .w30 { width: 30px; } .w31 { width: 31px; } .w32 { width: 32px; } .w34 { width: 34px; }
.w36 { width: 36px; } .w37 { width: 37px; } .w38 { width: 38px; }
.sep { width: 1px; height: 26px; background: #dcdcdc; flex: none; }
.grip { display: block; width: 2px; height: 26px; background-image: linear-gradient(#a8a8a8 50%, transparent 50%); background-size: 2px 3px; }
.car { display: block; width: 0; height: 0; border-left: 3.500px solid transparent; border-right: 3.500px solid transparent; border-top: 4px solid #222; flex: none; }
.car.low { margin-top: 12px; }

.search { width: 154px; height: 20px; border: 1px solid #a8a8a8; display: flex; align-items: center; justify-content: space-between; padding: 0 6px 0 2px; flex: none; font-size: 14px; }
.search span { margin-top: -2px; }
.lens { width: 16px; height: 16px; }

.sel { height: 22px; border: 1px solid #a8a8a8; display: flex; align-items: center; justify-content: space-between; padding: 0 10px 0 2px; flex: none; font-size: 14px; color: #222; }
.sel span { margin-top: -2px; }
.s1 { width: 167px; margin-right: 7px; }
.s2 { width: 176px; padding-right: 8px; }

.tg { width: 30px; height: 30px; background: #c8d6d5; border: 1px solid #b9c9c8; margin-right: 1px; display: flex; align-items: center; justify-content: center; flex: none; }
.ml1 { margin-left: 1px; }

.work { flex: 1; display: flex; min-height: 0; }
.rail { width: 31px; flex: none; background: #dcdcdc; border-right: 1px solid #aeaeae; display: flex; flex-direction: column; overflow: hidden; }
.tab { display: flex; align-items: center; justify-content: center; flex: none; padding-left: 3px; }
.h3 { height: 3px; flex: none; } .h15 { height: 15px; flex: none; } .h26 { height: 26px; } .h36 { height: 36px; } .h38 { height: 38px; } .h42 { height: 42px; } .h46 { height: 46px; } .h50 { height: 50px; } .h54 { height: 54px; } .h58 { height: 58px; }
.tab.h26 { padding-left: 0; padding-right: 3px; }
.active { height: 44px; background: #fff; margin-left: 1px; margin-right: -1px; border: 1px solid #cfcfcf; border-right: 0; padding-left: 1px; }
.gear { width: 14px; height: 14px; }
.si { width: 24px; height: 24px; display: block; }

.panel { width: 397px; flex: none; background: #fff; border-right: 1px solid #9b9f9f; padding: 0 9px 0 6px; display: flex; flex-direction: column; }
.phead { height: 31px; display: flex; align-items: center; justify-content: space-between; padding: 0 7px 0 4px; flex: none; }
h1 { margin: 0; font-size: 15px; font-weight: 400; color: #333; line-height: 30px; margin-top: -2px; }
.maxi { display: block; width: 14px; height: 13px; border: 1.500px solid #222; border-top-width: 2px; margin-top: 3px; }

.frame { width: 381px; border: 1px solid #dcdcdc; border-top: 0; flex: none; height: 798px; }
.tree { height: 150px; border-top: 1px solid #dcdcdc; position: relative; overflow: hidden; }
.thead { height: 23px; display: flex; background: #efefef; border-bottom: 1px solid #d8d8d8; font-size: 14.670px; line-height: 24px; color: #444; }
.col { border-right: 1px solid #d4d4d4; }
.thead .cn { padding-left: 8px; display: flex; align-items: center; }
.thead .cl, .thead .cr { padding-left: 6px; }
.thead .cr { padding-left: 6px; border-right: 0; }
.cn { width: 245px; flex: none; } .cl { width: 45px; flex: none; } .cr { flex: 1; }
.row { height: 22px; display: flex; background: #fff; border-bottom: 1px solid #f0f0f0; }
.row.alt { background: #fafafa; }
.row.last { height: 15px; border-bottom: 0; }
.row .cn { display: flex; align-items: center; border-right: 1px solid #eee; }
.row .cl { border-right: 1px solid #eee; display: flex; align-items: center; justify-content: flex-start; padding-left: 5px; }
.ind { width: 20px; flex: none; display: block; position: relative; height: 12px; }
.ind.i2 { width: 41px; }
.exp { position: absolute; left: 6px; top: 1px; width: 10px; height: 10px; background: #fff; border: 1px solid #ddd; font-size: 11px; line-height: 7px; text-align: center; font-weight: 400; font-family: "Liberation Sans", sans-serif; color: #111; }
.ti { width: 16px; height: 16px; flex: none; }
.ti.body { margin-right: 3px; }
.ck { width: 14px; height: 14px; flex: none; margin-right: 1px; }
.ck.m { margin: 0; width: 14px; }
.tx { margin-left: 4px; font-size: 14.670px; color: #444; margin-top: -1px; }
.ti.body + .tx { margin-left: 1px; }
.dk { color: #222; font-family: "Noto Sans CJK TC", "Liberation Serif", serif; }
.cb { width: 13px; height: 13px; border: 1.500px solid #222; background: #fff; display: block; flex: none; margin-left: -1px; margin-right: 1px; }
.cb svg { display: block; width: 10px; height: 10px; }
.up { display: block; width: 0; height: 0; border-left: 5px solid transparent; border-right: 5px solid transparent; border-bottom: 5px solid #222; }
.tri1 { margin-left: 19px; }
.tri2 { margin-left: 18px; }
.lines { position: absolute; left: 0; top: 23px; width: 60px; height: 110px; pointer-events: none; }
.row .cn > * { position: relative; }

.sect { flex: none; }
.s-dep { height: 325px; border-top: 5px solid #c9c9c9; padding: 0 6px; }
.s-det { border-top: 2px solid #dcdcdc; padding: 0 5px 0 6px; height: 320px; }
.stitle { display: flex; justify-content: space-between; align-items: center; }
h2 { margin: 0; font-size: 17.500px; font-weight: 400; color: #5b9bbb; line-height: 24px; }
.chev { width: 16px; height: 10px; display: block; margin-right: -2px; }
.s-dep .stitle { height: 25px; margin-bottom: 7px; }
.depbody { display: flex; gap: 2px; align-items: flex-start; }
.stripes { width: 333px; height: 282px; border: 1px solid #dcdcdc; background: repeating-linear-gradient(#fff 0, #fff 21px, #eeeeee 21px, #eeeeee 22px, #fafafa 22px, #fafafa 43px, #eeeeee 43px, #eeeeee 44px); }
.btns { display: flex; flex-direction: column; gap: 2px; }
.btn { width: 32px; height: 32px; border: 1px solid #dcdcdc; display: flex; align-items: center; justify-content: center; background: #fff; }
.btn svg { width: 26px; height: 26px; display: block; }
.btn.on { border: 1px solid #8c8c8c; }

.s-det .stitle { height: 23px; margin-bottom: 8px; }
.detwrap { width: 367px; height: 282px; border: 1px solid #dcdcdc; overflow: hidden; }
.det { width: 100%; border-collapse: collapse; table-layout: fixed; }
.det th { height: 24px; background: #eee; border-right: 1px solid #d4d4d4; border-bottom: 1px solid #d4d4d4; font-weight: 400; text-align: left; padding: 0 0 1px 7px; font-size: 14.670px; color: #444; }
.det th:last-child { border-right: 0; }
.det .d1 { width: 64px; } .det .d2 { width: 40px; } .det .d3 { width: 88px; }
.d3 b { display: inline-block; vertical-align: 2px; }
.det td { height: 22px; border-right: 1px solid #e8e8e8; border-bottom: 1px solid #efefef; padding: 0; }
.det td:last-child { border-right: 0; }
.det tr:nth-child(even) td { background: #fafafa; }
.prev { flex: none; padding: 0 5px 0 7px; margin-top: -1px; height: 20px; align-items: flex-start; }
.prev h2 { margin-top: -1px; }
.prev .chev { margin-top: 8px; margin-right: -4px; }

.view { flex: 1; background: linear-gradient(#b4b9ba 0, #cdd1d1 40%, #e0e3e3 75%, #e8ebec 100%); position: relative; overflow: hidden; }
.scene { position: absolute; inset: 0; width: 100%; height: 100%; display: block; }
.t3 { font-family: "Liberation Sans", sans-serif; font-size: 13px; }
.t2 { font-family: "Liberation Sans", sans-serif; font-size: 11px; }
.tb { fill: #2a50c8; } .tg2 { fill: #4ea86a; } .tg3 { fill: #6aa878; } .tr { fill: #c84040; }
```
